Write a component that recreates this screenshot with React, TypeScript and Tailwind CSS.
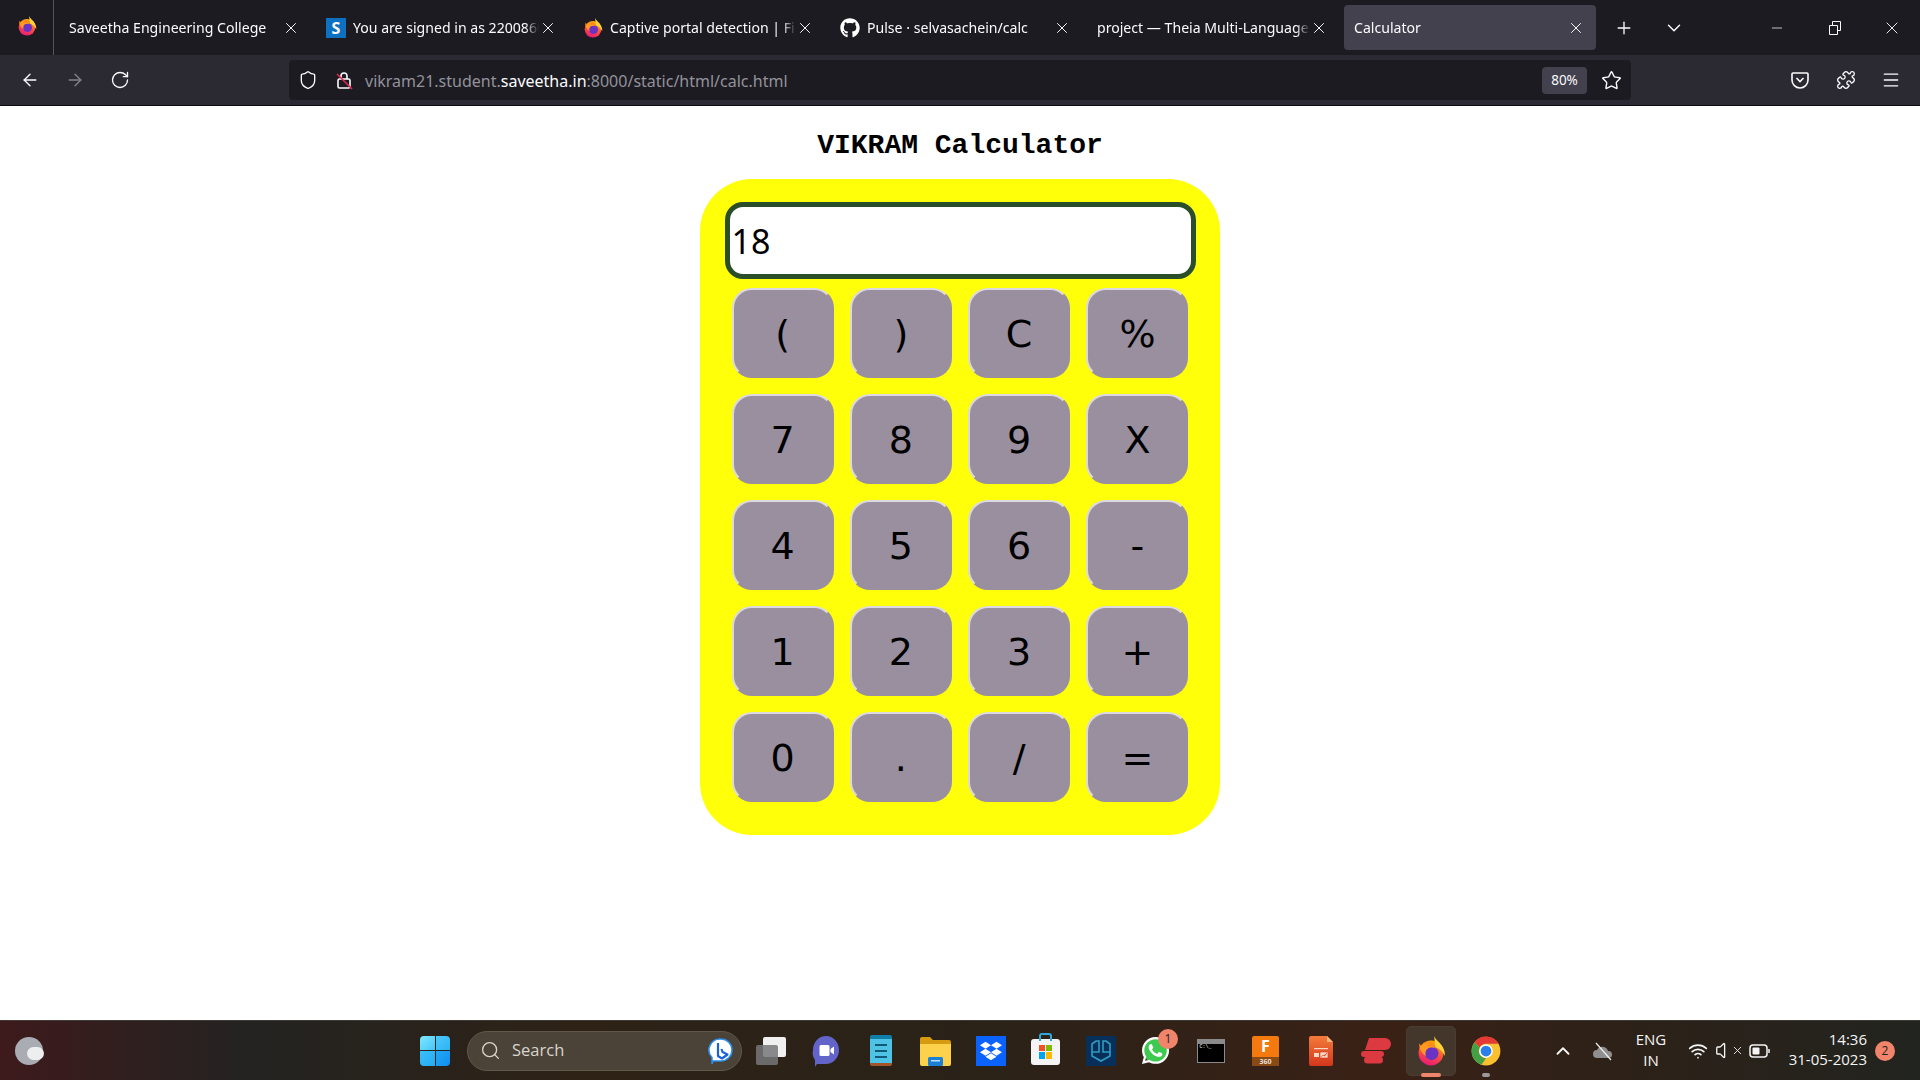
import {
  ArrowLeft,
  ArrowRight,
  ChevronDown,
  ChevronUp,
  Menu,
  Minus,
  Plus,
  Puzzle,
  RotateCw,
  Search,
  Shield,
  Star,
  Volume,
  Wifi,
  X,
} from "lucide-react";
import { FaDropbox, FaGithub, FaWhatsapp } from "react-icons/fa";

const keys = ["(", ")", "C", "%", "7", "8", "9", "X", "4", "5", "6", "-", "1", "2", "3", "+", "0", ".", "/", "="];

function FirefoxIcon({ size = 20, id }: { size?: number; id: string }) {
  return (
    <svg width={size} height={size} viewBox="0 0 24 24">
      <defs>
        <linearGradient id={id} x1="0.7" y1="0" x2="0.35" y2="1">
          <stop offset="0" stopColor="#ffb000" />
          <stop offset="0.55" stopColor="#ff4f3a" />
          <stop offset="1" stopColor="#e5197c" />
        </linearGradient>
      </defs>
      <circle cx="12" cy="13.500" r="10" fill={`url(#${id})`} />
      <path d="M14.500 0c1 3 5 5 7 9 1.500 3 1.800 5 1.500 7-1-3-4-6-7.500-7z" fill="#ffd338" />
      <circle cx="12.500" cy="13.800" r="5.500" fill="#6a33c4" />
      <path d="M2.500 5.500c.5 1 1 2 2 2.500C6 5.500 9.500 5 11 5.500c-1 .5-2 1.500-2 2.500 2-.5 5-.3 7 2-2-1-5-1-6.500 0C7.500 11.500 7 14 8 16 4.500 14 2.500 10 2.500 5.500z" fill="#ff9a1f" />
    </svg>
  );
}

function ChromeIcon() {
  return (
    <svg width={30} height={30} viewBox="0 0 24 24">
      <circle cx="12" cy="12" r="11.500" fill="#fbc02d" />
      <path d="M12 .5a11.500 11.500 0 0 1 10 5.750H12a5.750 5.750 0 0 0-5 2.900L2.700 5.200A11.500 11.500 0 0 1 12 .5z" fill="#e53935" />
      <path d="M2.700 5.200 7 9.150a5.750 5.750 0 0 0 5 8.600l-3.600 5.200A11.500 11.500 0 0 1 2.700 5.200z" fill="#43a047" />
      <circle cx="12" cy="12" r="5.500" fill="#fff" />
      <circle cx="12" cy="12" r="4.300" fill="#2b7de9" />
    </svg>
  );
}

function WindowsIcon() {
  return (
    <div className="grid h-[30px] w-[30px] grid-cols-2 gap-[1px]">
      <div className="rounded-tl-sm bg-gradient-to-br from-[#7ce8ff] to-[#45c6f8]" />
      <div className="rounded-tr-sm bg-gradient-to-br from-[#4cc8fa] to-[#2bb4f5]" />
      <div className="rounded-bl-sm bg-gradient-to-br from-[#3cc0f8] to-[#24aaf3]" />
      <div className="rounded-br-sm bg-gradient-to-br from-[#22a8f4] to-[#0f8ff0]" />
    </div>
  );
}

function BingIcon() {
  return (
    <svg width="26" height="28" viewBox="0 0 26 28">
      <path d="M13 2a11 11 0 0 1 0 22H5l-1 3v-6.500A11 11 0 0 1 13 2z" fill="#fff" stroke="#2a8df0" strokeWidth="1.500" />
      <path d="M10 6v13l4 2.500 5.500-4-5-2.500-1-3" fill="none" stroke="#1a62d6" strokeWidth="2.200" strokeLinejoin="round" />
    </svg>
  );
}

function Tab({ icon, label, active }: { icon?: React.ReactNode; label: string; active?: boolean }) {
  return (
    <div
      className={`mr-[5px] flex h-[45px] w-[252px] items-center gap-[7px] rounded-[4px] pl-[10px] pr-[11px] text-[14.100px] text-[#fbfbfe] ${
        active ? "bg-[#42414d]" : ""
      }`}
    >
      {icon}
      <span
        className="-mr-[7px] min-w-0 flex-1 overflow-hidden whitespace-nowrap pt-[1px]"
        style={{ maskImage: "linear-gradient(to left, transparent 0, black 14px)" }}
      >
        {label}
      </span>
      <X size={18} strokeWidth={1.3} className="shrink-0 text-[#fbfbfe]" />
    </div>
  );
}

function TabBar() {
  return (
    <div className="flex h-[55px] items-center bg-[#1c1b22]">
      <div className="flex h-full w-[54px] items-center justify-center border-r border-[#55545c] pb-[3px]">
        <FirefoxIcon size={20} id="ffMain" />
      </div>
      <div className="ml-[5px] flex items-center">
        <Tab label="Saveetha Engineering College" />
        <Tab
          label="You are signed in as 220086013"
          icon={
            <span className="flex h-[20px] w-[20px] shrink-0 items-center justify-center bg-[#0e70c0] text-[16px] font-bold text-white">
              S
            </span>
          }
        />
        <Tab label="Captive portal detection | Firefox" icon={<FirefoxIcon size={20} id="ffTab" />} />
        <Tab label="Pulse · selvasachein/calc" icon={<FaGithub size={20} className="shrink-0 text-white" />} />
        <Tab label="project — Theia Multi-Language IDE" />
        <Tab label="Calculator" active />
      </div>
      <Plus size={20} strokeWidth={1.6} className="ml-[13px] text-[#fbfbfe]" />
      <ChevronDown size={22} strokeWidth={1.6} className="ml-[29px] text-[#fbfbfe]" />
      <div className="ml-auto flex items-center text-[#fbfbfe]">
        <Minus size={16} strokeWidth={1.1} className="mr-[43px]" />
        <svg width="14" height="14" viewBox="0 0 14 14" fill="none" stroke="currentColor" className="mr-[40px]">
          <path d="M1.500 4.500h8v9h-8z M4.500 4.500v-4h8v9h-3" />
        </svg>
        <X size={20} strokeWidth={1.1} className="mr-[18px]" />
      </div>
    </div>
  );
}

function NavBar() {
  return (
    <div className="flex h-[51px] items-center border-b border-[#0c0c0d] bg-[#2b2a33] pl-[20px] text-[#fbfbfe]">
      <ArrowLeft size={20} strokeWidth={1.6} />
      <ArrowRight size={20} strokeWidth={1.6} className="ml-[25px] text-[#83828a]" />
      <RotateCw size={20} strokeWidth={1.6} className="ml-[25px]" />
      <div className="ml-[159px] flex h-[40px] w-[1342px] shrink-0 items-center rounded-[4px] bg-[#1c1b22] pl-[9px] pr-[8px]">
        <Shield size={20} strokeWidth={1.6} />
        <div className="relative ml-[18px]">
          <svg width="18" height="20" viewBox="0 0 18 20" fill="none" stroke="currentColor" strokeWidth="1.600">
            <rect x="2" y="9" width="12" height="9" rx="1.500" />
            <path d="M5 9V6a3 3 0 0 1 6 0v3" />
          </svg>
          <svg width="18" height="20" viewBox="0 0 18 20" className="absolute left-0 top-0">
            <path d="M1 4l15 15" stroke="#e22850" strokeWidth="1.600" />
          </svg>
        </div>
        <div className="ml-[11px] flex-1 whitespace-nowrap pt-[2px] text-[16px] text-[#93929a]">
          vikram21.student.<span className="text-[#fbfbfe]">saveetha.in</span>:8000/static/html/calc.html
        </div>
        <div className="flex h-[27px] w-[45px] items-center justify-center rounded-[4px] bg-[#42414d] text-[13.500px]">80%</div>
        <Star size={21} strokeWidth={1.6} className="ml-[14px] mr-[1px]" />
      </div>
      <svg width="20" height="20" viewBox="0 0 20 20" fill="none" stroke="currentColor" strokeWidth="1.600" className="ml-[159px]">
        <path d="M3 3h14a1 1 0 0 1 1 1v6a8 8 0 0 1-16 0V4a1 1 0 0 1 1-1z" />
        <path d="M6.500 8 10 11.500 13.500 8" />
      </svg>
      <Puzzle size={20} strokeWidth={1.6} className="ml-[26px]" />
      <Menu size={20} strokeWidth={1.6} className="ml-[25px]" />
    </div>
  );
}

function Calculator() {
  return (
    <div className="flex flex-1 flex-col items-center bg-white pt-[22px]">
      <h1 className="font-['Liberation_Mono',monospace] text-[28px] font-bold leading-[36px] text-black">VIKRAM Calculator</h1>
      <div className="mt-[15px] flex h-[656px] w-[520px] flex-col items-center rounded-[52px] bg-[#ffff0a] pt-[23px]">
        <div className="flex h-[77px] w-[471px] items-center rounded-[18px] border-[5px] border-[#2a4d2a] bg-white pl-[2px] pt-[1px] font-['Noto_Sans',sans-serif] text-[34px] text-black">
          18
        </div>
        <div className="mt-[9px] grid grid-cols-[repeat(4,102px)] gap-x-[16.300px] gap-y-[16px]">
          {keys.map((k) => (
            <div
              key={k}
              className="flex h-[90px] items-center justify-center rounded-[20px] border-2 border-b-[#998f9f] border-l-[#dcdae0] border-r-[#998f9f] border-t-[#dcdae0] bg-[#998f9f] pt-[3px] font-['DejaVu_Sans',sans-serif] text-[38px] text-black"
            >
              {k}
            </div>
          ))}
        </div>
      </div>
    </div>
  );
}

function TaskIcon({ children }: { children: React.ReactNode }) {
  return <div className="relative flex h-[60px] w-[55px] items-center justify-center">{children}</div>;
}

function Taskbar() {
  return (
    <div className="flex h-[60px] items-center border-t border-[#3d3a36] bg-[linear-gradient(90deg,#3e1a1c_0%,#232321_13%,#2e2216_30%,#2a2218_50%,#3a2116_72%,#2c2118_85%,#22241f_100%)] font-['Open_Sans',sans-serif] text-[#f5f5f5]">
      <div className="relative ml-[15px] h-[28px] w-[28px] rounded-full bg-[#a9adb3]">
        <div className="absolute bottom-[5px] right-[-1px] h-[13px] w-[17px] rounded-full bg-[#eceef0]" />
      </div>
      <div className="ml-[377px]">
        <WindowsIcon />
      </div>
      <div className="ml-[17px] flex h-[40px] w-[275px] items-center rounded-full border border-[#5f5849] bg-[#4b4337] pl-[12px] pr-[7px]">
        <Search size={21} strokeWidth={1.5} className="text-[#d8d5ce]" />
        <span className="ml-[11px] flex-1 text-[16.500px] text-[#d8d5ce]">Search</span>
        <BingIcon />
      </div>
      <div className="ml-[1px] flex items-center">
        <TaskIcon>
          <div className="relative h-[28px] w-[30px]">
            <div className="absolute right-0 top-0 h-[20px] w-[23px] rounded-[2px] bg-[#f0f0f0]" />
            <div className="absolute bottom-0 left-0 h-[20px] w-[22px] rounded-[2px] bg-[#77777a]/85" />
          </div>
        </TaskIcon>
        <TaskIcon>
          <svg width="30" height="32" viewBox="0 0 30 32">
            <path d="M15 1c7 0 13 6 13 14s-6 14-13 14H6l-2 3v-7C2 22 1 19 2 15 2 7 8 1 15 1z" fill="#6264c9" />
            <rect x="8.500" y="10" width="10" height="11" rx="1.500" fill="#fff" />
            <path d="M19.500 14l3.500-2.500v8L19.500 17z" fill="#fff" />
          </svg>
        </TaskIcon>
        <TaskIcon>
          <div className="flex h-[31px] w-[22px] flex-col justify-center gap-[4px] rounded-[2px] border-b-[3px] border-t-[4px] border-b-[#a4562a] border-t-[#0f7ea8] bg-[#4ec3e6] px-[5px]">
            <div className="h-[2px] bg-[#0f5c78]" />
            <div className="h-[2px] bg-[#0f5c78]" />
            <div className="h-[2px] bg-[#0f5c78]" />
          </div>
        </TaskIcon>
        <TaskIcon>
          <svg width="31" height="30" viewBox="0 0 31 30">
            <path d="M0 3a2 2 0 0 1 2-2h8l3 3h16a2 2 0 0 1 2 2v4H0z" fill="#d79b12" />
            <path d="M0 8h31v20a2 2 0 0 1-2 2H2a2 2 0 0 1-2-2z" fill="#fcd24d" />
            <rect x="8" y="21" width="15" height="9" rx="1.500" fill="#1b7fd6" />
            <rect x="11" y="24" width="9" height="1.500" fill="#bfe0fa" />
          </svg>
        </TaskIcon>
        <TaskIcon>
          <div className="flex h-[30px] w-[30px] items-center justify-center bg-[#0a62ff]">
            <FaDropbox size={22} className="text-white" />
          </div>
        </TaskIcon>
        <TaskIcon>
          <div className="relative mt-[2px] grid h-[26px] w-[29px] grid-cols-2 gap-[1px] rounded-[3px] bg-[#f4f4f4] px-[8px] py-[6px]">
            <div className="absolute left-[8px] top-[-6px] h-[8px] w-[13px] rounded-t-[3px] border-2 border-b-0 border-[#2fa8e0]" />
            <div className="bg-[#f25022]" />
            <div className="bg-[#7fba00]" />
            <div className="bg-[#00a4ef]" />
            <div className="bg-[#ffb900]" />
          </div>
        </TaskIcon>
        <TaskIcon>
          <div className="flex h-[30px] w-[30px] items-center justify-center bg-[#06305a]">
            <svg width="22" height="24" viewBox="0 0 22 24" fill="none" stroke="#2f9cc4" strokeWidth="1.600">
              <path d="M2 5l4-3h3v11H2z M20 5l-4-3h-3v11h7z" />
              <path d="M2 13v4l9 5 9-5v-4" />
            </svg>
          </div>
        </TaskIcon>
        <TaskIcon>
          <div className="absolute h-[25px] w-[25px] rounded-full bg-[#3ec94f]" />
          <FaWhatsapp size={31} className="relative text-white" />
          <span className="absolute right-[5px] top-[8px] flex h-[20px] w-[20px] items-center justify-center rounded-full bg-[#f0856c] text-[12px] text-[#222]">
            1
          </span>
        </TaskIcon>
        <TaskIcon>
          <div className="h-[24px] w-[28px] border-x border-b border-t-[5px] border-[#8a8a8a] bg-black pl-[2px] font-['Liberation_Mono',monospace] text-[5px] leading-[6px] text-white">
            C:\_
          </div>
        </TaskIcon>
        <TaskIcon>
          <div className="flex h-[30px] w-[27px] flex-col rounded-[2px] bg-[#f47a10] text-center text-[16px] font-bold leading-[21px] text-white">
            F<span className="bg-[#8a4a14] text-[7px] leading-[9px] text-[#e8e0d8]">360</span>
          </div>
        </TaskIcon>
        <TaskIcon>
          <svg width="24" height="30" viewBox="0 0 24 30">
            <defs>
              <linearGradient id="pptBody" x1="0" y1="0" x2="0" y2="1">
                <stop offset="0" stopColor="#f47b3c" />
                <stop offset="1" stopColor="#d4361c" />
              </linearGradient>
            </defs>
            <path d="M2 0h16l6 6v22a2 2 0 0 1-2 2H2a2 2 0 0 1-2-2V2a2 2 0 0 1 2-2z" fill="url(#pptBody)" />
            <path d="M18 0l6 6h-6z" fill="#f8b27c" />
            <rect x="5" y="12" width="14" height="1.200" fill="#fbd8c4" />
            <rect x="5" y="17" width="5" height="4" fill="#fbd8c4" />
            <path d="M11 16h8v6h-8zM12 21l2-2 1.500 1 2.500-3" fill="#fbd8c4" stroke="#d4361c" strokeWidth="0.600" />
          </svg>
        </TaskIcon>
        <TaskIcon>
          <svg width="31" height="26" viewBox="0 0 31 26" fill="#dc3a40">
            <path d="M9 0h16a6 6 0 0 1 0 12H5z" />
            <rect x="1" y="13" width="23" height="6" rx="3" />
            <rect x="4" y="18.500" width="19" height="7" rx="3.500" />
          </svg>
        </TaskIcon>
        <TaskIcon>
          <div className="flex h-[50px] w-[50px] items-center justify-center rounded-[5px] border border-[#4a3c30] bg-[#43362b]">
            <FirefoxIcon size={30} id="ffTask" />
          </div>
          <div className="absolute bottom-[4px] h-[4px] w-[20px] rounded-full bg-[#f0856c]" />
        </TaskIcon>
        <TaskIcon>
          <ChromeIcon />
          <div className="absolute bottom-[4px] h-[4px] w-[8px] rounded-full bg-[#9a9a9a]" />
        </TaskIcon>
      </div>
      <ChevronUp size={22} strokeWidth={2} className="ml-[39px]" />
      <svg width="22" height="22" viewBox="0 0 22 22" className="ml-[18px]">
        <path d="M5 18a4 4 0 0 1 0-8 6 6 0 0 1 11 1 3.500 3.500 0 0 1 1 7z" fill="#8f8f8f" />
        <path d="M4 3l15 17" stroke="#f0f0f0" strokeWidth="1.200" />
      </svg>
      <div className="ml-[15px] w-[44px] pb-[2px] text-center text-[15px] leading-[21px]">
        ENG
        <br />
        IN
      </div>
      <Wifi size={20} strokeWidth={2} className="ml-[15px]" />
      <Volume size={21} strokeWidth={1.5} className="ml-[7px]" />
      <X size={13} strokeWidth={1.6} className="-ml-[5px]" />
      <svg width="22" height="16" viewBox="0 0 22 16" fill="none" stroke="currentColor" strokeWidth="1.500" className="ml-[5px]">
        <rect x="1" y="2" width="17" height="12" rx="3" />
        <rect x="3.500" y="4.500" width="7" height="7" rx="1" fill="currentColor" stroke="none" />
        <path d="M20 6v4" />
      </svg>
      <div className="ml-auto pb-[3px] text-right text-[15px] leading-[20px]">
        14:36
        <br />
        31-05-2023
      </div>
      <div className="ml-[8px] mr-[25px] flex h-[20px] w-[20px] items-center justify-center rounded-full bg-[#f0856c] text-[12px] text-[#222]">2</div>
    </div>
  );
}

export default function App() {
  return (
    <div className="flex h-screen flex-col overflow-hidden font-['Noto_Sans',sans-serif]">
      <TabBar />
      <NavBar />
      <Calculator />
      <Taskbar />
    </div>
  );
}
